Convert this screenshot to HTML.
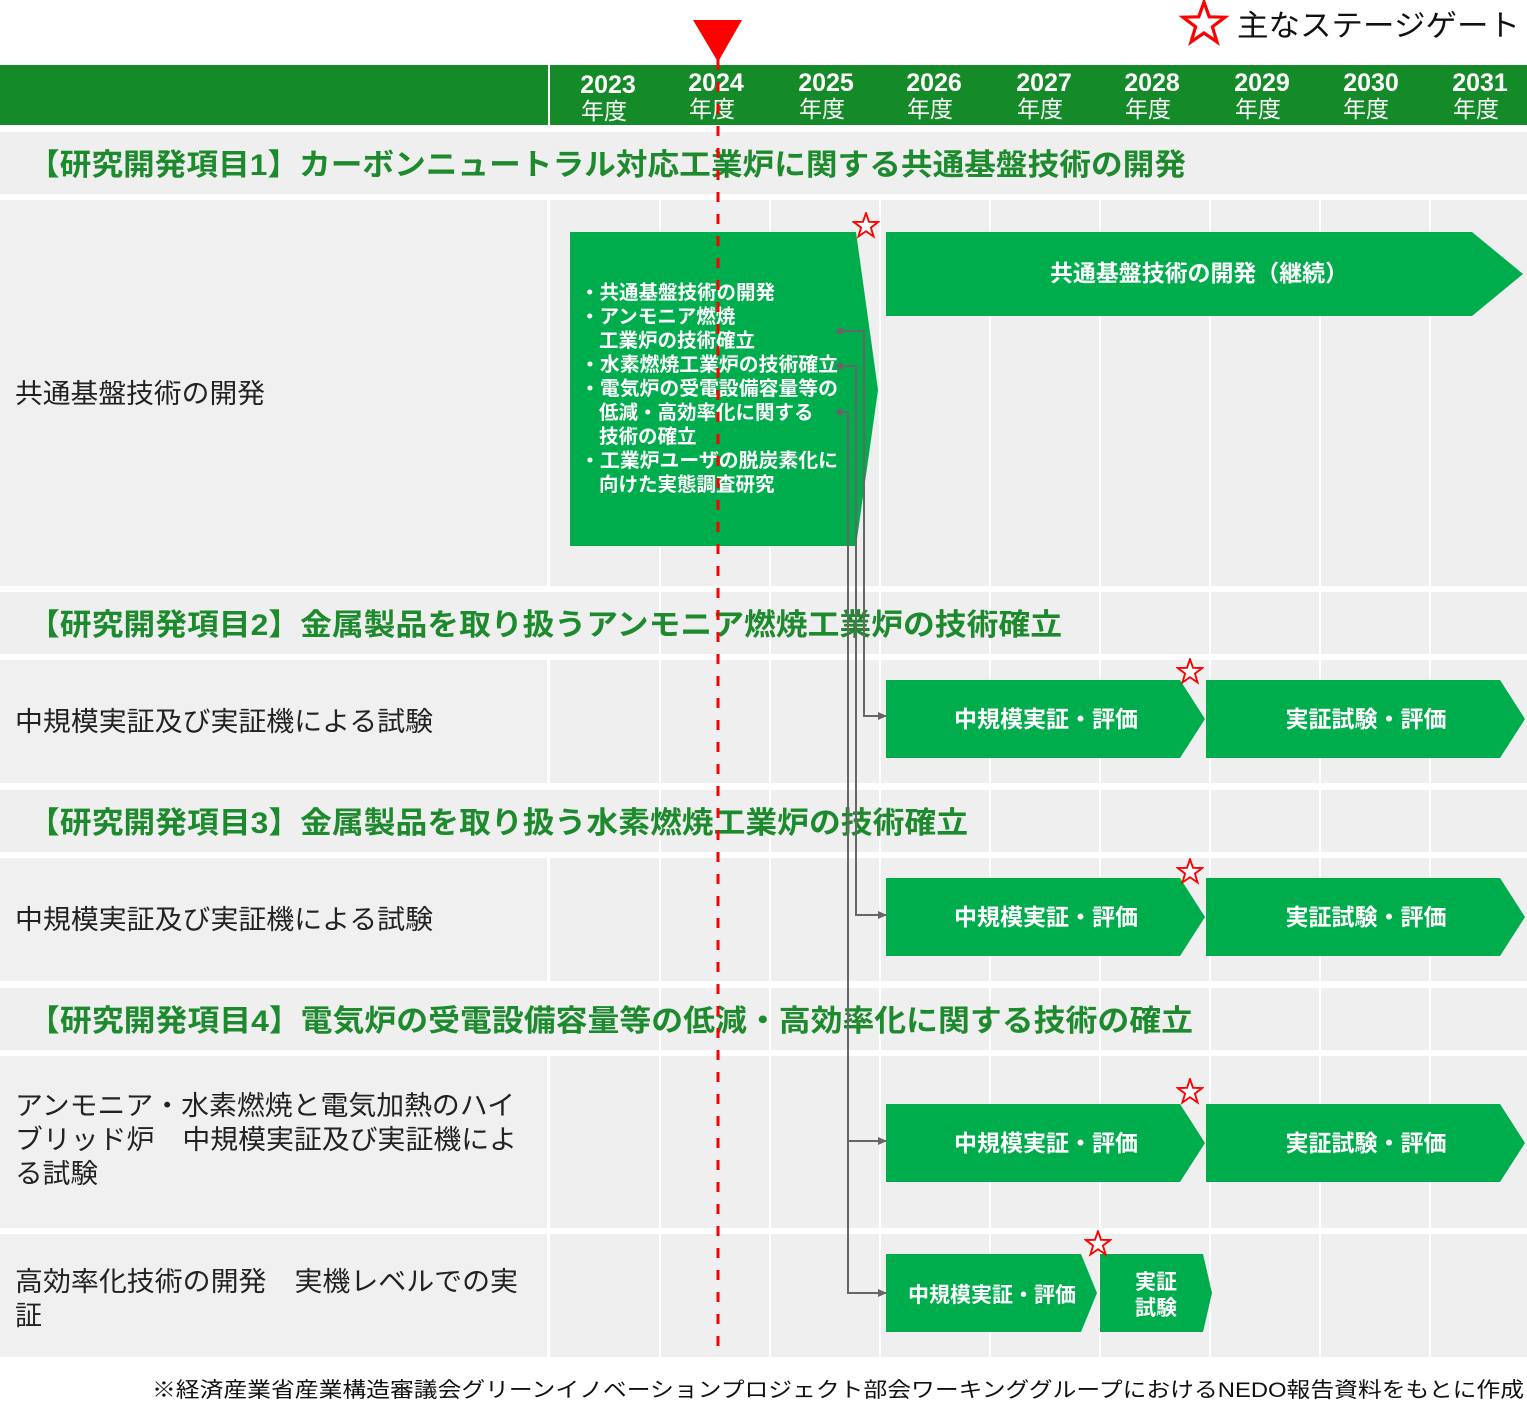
<!DOCTYPE html>
<html><head><meta charset="utf-8"><style>
html,body{margin:0;padding:0;background:#fff;}
body{width:1527px;height:1404px;position:relative;overflow:hidden;font-family:"Liberation Sans","Noto Sans CJK JP",sans-serif;}
svg{position:absolute;left:0;top:0;}
svg text{font-family:"Liberation Sans","Noto Sans CJK JP",sans-serif;}
</style></head><body>
<svg width="1527" height="1404" viewBox="0 0 1527 1404">
<defs>
<marker id="ar" markerWidth="10" markerHeight="10" refX="8" refY="4" orient="auto" markerUnits="userSpaceOnUse"><path d="M0,0 L9,4 L0,8 Z" fill="#666"/></marker>
<symbol id="st" viewBox="-12 -12 24 24"><polygon points="0,-11 2.6,-3.6 10.5,-3.4 4.2,1.4 6.5,9 0,4.5 -6.5,9 -4.2,1.4 -10.5,-3.4 -2.6,-3.6" fill="#fff" stroke="#f00" stroke-width="1.6"/></symbol>
</defs>
<rect x="0" y="65" width="1527" height="60" fill="#158a28"/>
<rect x="548" y="65" width="2" height="60" fill="#fff"/>
<g fill="#fff" font-weight="bold" font-size="25" text-anchor="middle">
<text x="608" y="93">2023</text><text x="716" y="91">2024</text><text x="826" y="91">2025</text><text x="934" y="91">2026</text><text x="1044" y="91">2027</text><text x="1152" y="91">2028</text><text x="1262" y="91">2029</text><text x="1371" y="91">2030</text><text x="1480" y="91">2031</text>
</g>
<g fill="#fff" font-size="23" text-anchor="middle">
<text x="604" y="119">年度</text><text x="712" y="117">年度</text><text x="822" y="117">年度</text><text x="930" y="117">年度</text><text x="1040" y="117">年度</text><text x="1148" y="117">年度</text><text x="1258" y="117">年度</text><text x="1366" y="117">年度</text><text x="1476" y="117">年度</text>
</g>
<g fill="#efefef">
<rect x="0" y="132" width="1527" height="62"/>
<rect x="0" y="592" width="1527" height="62"/>
<rect x="0" y="790" width="1527" height="62"/>
<rect x="0" y="988" width="1527" height="62"/>
</g>
<g fill="#f0f0f0">
<rect x="0" y="200" width="547" height="386"/>
<rect x="0" y="660" width="547" height="123"/>
<rect x="0" y="858" width="547" height="123"/>
<rect x="0" y="1056" width="547" height="172"/>
<rect x="0" y="1234" width="547" height="123"/>
</g>
<g fill="#efefef">
<rect x="550" y="200" width="977" height="386"/>
<rect x="550" y="660" width="977" height="123"/>
<rect x="550" y="858" width="977" height="123"/>
<rect x="550" y="1056" width="977" height="172"/>
<rect x="550" y="1234" width="977" height="123"/>
</g>
<g fill="#fff">
<rect x="659" y="200" width="2" height="1157"/><rect x="769" y="200" width="2" height="1157"/><rect x="879" y="200" width="2" height="1157"/><rect x="989" y="200" width="2" height="1157"/><rect x="1099" y="200" width="2" height="1157"/><rect x="1209" y="200" width="2" height="1157"/><rect x="1319" y="200" width="2" height="1157"/><rect x="1429" y="200" width="2" height="1157"/>
<rect x="0" y="586" width="1527" height="6"/><rect x="0" y="654" width="1527" height="6"/><rect x="0" y="783" width="1527" height="7"/><rect x="0" y="852" width="1527" height="6"/><rect x="0" y="981" width="1527" height="7"/><rect x="0" y="1050" width="1527" height="6"/><rect x="0" y="1228" width="1527" height="6"/>
</g>
<g fill="#1e8a2e" font-weight="bold" font-size="30" lengthAdjust="spacingAndGlyphs">
<text x="28" y="175" textLength="1158" lengthAdjust="spacingAndGlyphs">【研究開発項目1】カーボンニュートラル対応工業炉に関する共通基盤技術の開発</text>
<text x="28" y="635" textLength="1034" lengthAdjust="spacingAndGlyphs">【研究開発項目2】金属製品を取り扱うアンモニア燃焼工業炉の技術確立</text>
<text x="28" y="833" textLength="940" lengthAdjust="spacingAndGlyphs">【研究開発項目3】金属製品を取り扱う水素燃焼工業炉の技術確立</text>
<text x="28" y="1031" textLength="1165" lengthAdjust="spacingAndGlyphs">【研究開発項目4】電気炉の受電設備容量等の低減・高効率化に関する技術の確立</text>
</g>
<g fill="#222" font-size="27">
<text x="15" y="403" textLength="250" lengthAdjust="spacingAndGlyphs">共通基盤技術の開発</text>
<text x="15" y="731" textLength="418" lengthAdjust="spacingAndGlyphs">中規模実証及び実証機による試験</text>
<text x="15" y="929" textLength="418" lengthAdjust="spacingAndGlyphs">中規模実証及び実証機による試験</text>
<text x="15" y="1115" textLength="500" lengthAdjust="spacingAndGlyphs">アンモニア・水素燃焼と電気加熱のハイ</text>
<text x="15" y="1149" textLength="502" lengthAdjust="spacingAndGlyphs">ブリッド炉　中規模実証及び実証機によ</text>
<text x="15" y="1183" textLength="83" lengthAdjust="spacingAndGlyphs">る試験</text>
<text x="15" y="1291" textLength="503" lengthAdjust="spacingAndGlyphs">高効率化技術の開発　実機レベルでの実</text>
<text x="15" y="1325">証</text>
</g>
<g fill="#00ad4c">
<polygon points="570,232 856,232 878,390 856,546 570,546"/>
<polygon points="886,232 1472,232 1523,274 1472,316 886,316"/>
<polygon points="886,680 1180,680 1205,719 1180,758 886,758"/>
<polygon points="1206,680 1500,680 1525,719 1500,758 1206,758"/>
<polygon points="886,878 1180,878 1205,917 1180,956 886,956"/>
<polygon points="1206,878 1500,878 1525,917 1500,956 1206,956"/>
<polygon points="886,1104 1180,1104 1205,1143 1180,1182 886,1182"/>
<polygon points="1206,1104 1500,1104 1525,1143 1500,1182 1206,1182"/>
<polygon points="886,1254 1081,1254 1097,1293 1081,1332 886,1332"/>
<polygon points="1100,1254 1203,1254 1212,1293 1203,1332 1100,1332"/>
</g>
<g fill="#fff" font-weight="bold" font-size="19.5">
<text x="580" y="299">・共通基盤技術の開発</text>
<text x="580" y="323">・アンモニア燃焼</text>
<text x="599" y="347">工業炉の技術確立</text>
<text x="580" y="371" textLength="258" lengthAdjust="spacingAndGlyphs">・水素燃焼工業炉の技術確立</text>
<text x="580" y="395" textLength="258" lengthAdjust="spacingAndGlyphs">・電気炉の受電設備容量等の</text>
<text x="599" y="419">低減・高効率化に関する</text>
<text x="599" y="443">技術の確立</text>
<text x="580" y="467" textLength="258" lengthAdjust="spacingAndGlyphs">・工業炉ユーザの脱炭素化に</text>
<text x="599" y="491">向けた実態調査研究</text>
</g>
<g fill="#fff" font-weight="bold" font-size="23" text-anchor="middle">
<text x="1199" y="281" textLength="298" lengthAdjust="spacingAndGlyphs">共通基盤技術の開発（継続）</text>
<text x="1046" y="727">中規模実証・評価</text><text x="1366" y="727">実証試験・評価</text>
<text x="1046" y="925">中規模実証・評価</text><text x="1366" y="925">実証試験・評価</text>
<text x="1046" y="1151">中規模実証・評価</text><text x="1366" y="1151">実証試験・評価</text>
<text x="992" y="1302" font-size="21">中規模実証・評価</text>
<text x="1156" y="1289" font-size="21">実証</text><text x="1156" y="1315" font-size="21">試験</text>
</g>
<g stroke="#666" stroke-width="2" fill="none">
<polyline points="840,331 864,331 864,716 886,716" marker-end="url(#ar)"/>
<polyline points="840,366 856,366 856,915 886,915" marker-end="url(#ar)"/>
<polyline points="840,412 848,412 848,1293 886,1293" marker-end="url(#ar)"/>
<polyline points="848,1141 886,1141" marker-end="url(#ar)"/>
</g>
<g fill="#666"><circle cx="840" cy="331" r="3.5"/><circle cx="840" cy="366" r="3.5"/><circle cx="840" cy="412" r="3.5"/></g>
<line x1="718" y1="60" x2="718" y2="1357" stroke="#f00" stroke-width="3" stroke-dasharray="10,12"/>
<polygon points="693,20 742,20 718,62" fill="#f00"/>
<use href="#st" x="852" y="212" width="28" height="28"/>
<use href="#st" x="1176" y="658" width="28" height="28"/>
<use href="#st" x="1176" y="858" width="28" height="28"/>
<use href="#st" x="1176" y="1078" width="28" height="28"/>
<use href="#st" x="1084" y="1230" width="28" height="28"/>
<use href="#st" x="1178" y="0" width="52" height="48"/>
<text x="1237" y="36" font-size="30" fill="#111" textLength="283" lengthAdjust="spacingAndGlyphs">主なステージゲート</text>
<text x="152" y="1397" font-size="21" fill="#111" textLength="1372" lengthAdjust="spacingAndGlyphs">※経済産業省産業構造審議会グリーンイノベーションプロジェクト部会ワーキンググループにおけるNEDO報告資料をもとに作成</text>
</svg>
</body></html>
